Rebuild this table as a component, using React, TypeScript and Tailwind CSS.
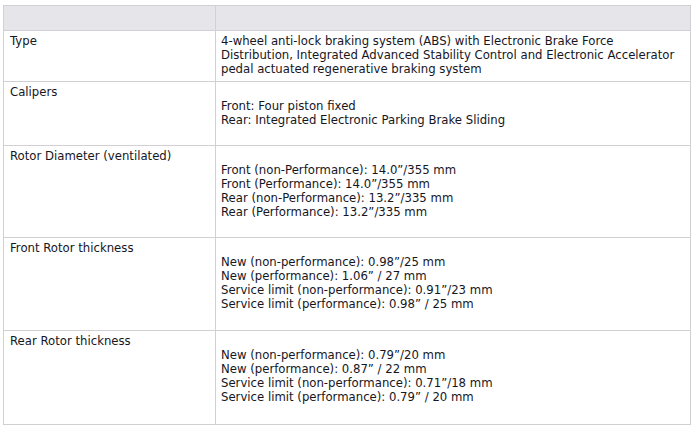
import React from 'react';

const rows = [
  {
    label: 'Type',
    lines: [
      '4-wheel anti-lock braking system (ABS) with Electronic Brake Force',
      'Distribution, Integrated Advanced Stability Control and Electronic Accelerator',
      'pedal actuated regenerative braking system',
    ],
    spaced: false,
    pad: 'pb-[5px]',
  },
  {
    label: 'Calipers',
    lines: ['Front: Four piston fixed', 'Rear: Integrated Electronic Parking Brake Sliding'],
    spaced: true,
    pad: 'pb-[4px]',
  },
  {
    label: 'Rotor Diameter (ventilated)',
    lines: [
      'Front (non-Performance): 14.0\u201d/355 mm',
      'Front (Performance): 14.0\u201d/355 mm',
      'Rear (non-Performance): 13.2\u201d/335 mm',
      'Rear (Performance): 13.2\u201d/335 mm',
    ],
    spaced: true,
    pad: 'pb-[4px]',
  },
  {
    label: 'Front Rotor thickness',
    lines: [
      'New (non-performance): 0.98\u201d/25 mm',
      'New (performance): 1.06\u201d / 27 mm',
      'Service limit (non-performance): 0.91\u201d/23 mm',
      'Service limit (performance): 0.98\u201d / 25 mm',
    ],
    spaced: true,
    pad: 'pb-[5px]',
  },
  {
    label: 'Rear Rotor thickness',
    lines: [
      'New (non-performance): 0.79\u201d/20 mm',
      'New (performance): 0.87\u201d / 22 mm',
      'Service limit (non-performance): 0.71\u201d/18 mm',
      'Service limit (performance): 0.79\u201d / 20 mm',
    ],
    spaced: true,
    pad: 'pb-[6px]',
  },
];

const App = () => {
  return (
    <div className="w-[694px] h-[430px] bg-white pt-[5px] pl-[3px] pr-[3px] font-['DejaVu_Sans',Verdana,sans-serif] text-[11.7px] leading-[14px] text-[#16161e]">
      <table className="w-[688px] border-collapse">
        <thead>
          <tr className="h-[25px] bg-[#e6e5ea]">
            <th className="w-[212px] border border-[#d2d0d4]"></th>
            <th className="border border-[#d2d0d4]"></th>
          </tr>
        </thead>
        <tbody>
          {rows.map((row) => (
            <tr key={row.label}>
              <td className={`align-top border border-[#d2d0d4] pl-[6px] pt-[3px] ${row.pad}`}>{row.label}</td>
              <td className={`align-top border border-[#d2d0d4] pl-[5px] pt-[3px] ${row.pad}`}>
                {row.spaced && <br />}
                {row.lines.map((line, i) => (
                  <div key={i}>{line}</div>
                ))}
                {row.spaced && <br />}
              </td>
            </tr>
          ))}
        </tbody>
      </table>
    </div>
  );
};

export default App;
